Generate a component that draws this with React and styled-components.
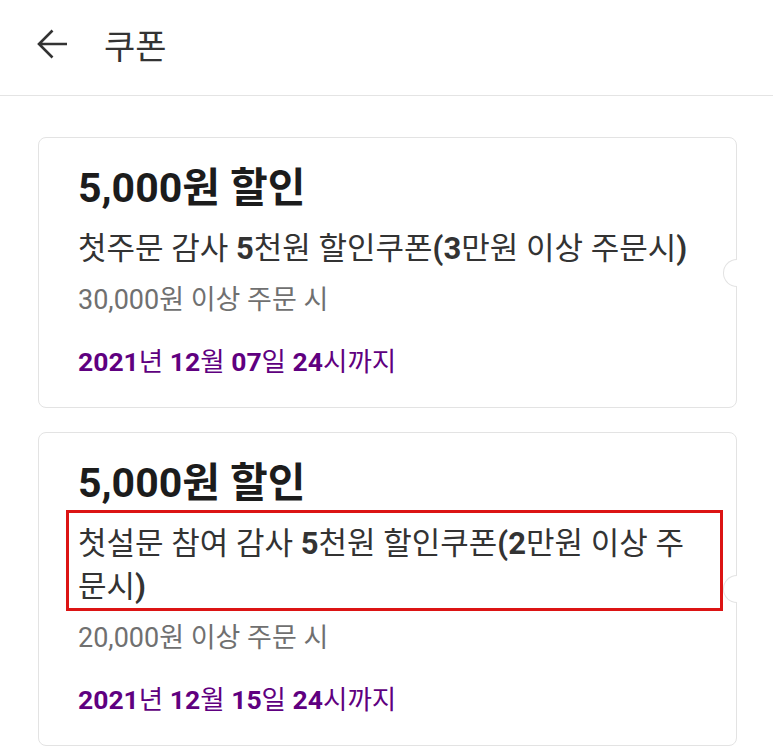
import React from "react";
import styled, { createGlobalStyle } from "styled-components";

const GlobalStyle = createGlobalStyle`
    body {
        margin: 0;
        background: #ffffff;
        font-family: Roboto, "Noto Sans CJK KR", sans-serif;
        color: #333333;
    }
`;

const Page = styled.div`
    width: 773px;
    min-height: 755px;
    background: #ffffff;
`;

const Header = styled.header`
    height: 95px;
    display: flex;
    align-items: center;
    padding: 0 0 0 37px;
    border-bottom: 1px solid #e4e4e4;
    box-sizing: content-box;
`;

const BackButton = styled.button`
    width: 32px;
    height: 32px;
    padding: 0;
    border: 0;
    background: none;
    display: flex;
    align-items: center;
    justify-content: center;
    margin-right: 35px;
    margin-top: -8px;
`;

const Title = styled.h1`
    margin: -6px 0 0;
    font-size: 34px;
    font-weight: 400;
    color: #333333;
`;

const CouponList = styled.div`
    display: flex;
    flex-direction: column;
    gap: 24px;
    padding: 41px 36px 0 38px;
`;

const CouponCard = styled.div`
    position: relative;
    border: 1px solid #e3e3e3;
    border-radius: 8px;
    padding: 24px 39px 27px 39px;
`;

const Notch = styled.span`
    position: absolute;
    right: -1px;
    top: 50%;
    width: 14px;
    height: 28px;
    margin-top: -14px;
    box-sizing: border-box;
    border: 1px solid #e3e3e3;
    border-right: 0;
    border-radius: 14px 0 0 14px;
    background: #ffffff;
`;

const Amount = styled.div`
    font-size: 41px;
    line-height: 52px;
    font-weight: 700;
    color: #1c1c1c;
`;

const NameWrap = styled.div`
    position: relative;
    margin-top: 13px;
`;

const Name = styled.div`
    font-size: 31px;
    line-height: 43px;
    color: #333333;
`;

const Num = styled.span`
    font-weight: 700;
`;

const Highlight = styled.span`
    position: absolute;
    left: -12px;
    right: -26px;
    top: -12px;
    bottom: -3px;
    border: 3px solid #dc1414;
    pointer-events: none;
`;

const Condition = styled.div`
    margin-top: 12px;
    font-size: 27px;
    line-height: 36px;
    color: #707070;
`;

const Expire = styled.div`
    margin-top: 26px;
    font-size: 26.5px;
    line-height: 36px;
    color: #5f0080;
`;

function ArrowLeft() {
    return (
        <svg width="32" height="32" viewBox="0 0 32 32" fill="none">
            <path d="M30 16H2.5M15.5 2.5L2 16l13.5 13.5" stroke="#333333" strokeWidth="2.6" />
        </svg>
    );
}

const coupons = [
    {
        id: 1,
        name: <>첫주문 감사 <Num>5</Num>천원 할인쿠폰<Num>(3</Num>만원 이상 주문시<Num>)</Num></>,
        condition: "30,000원 이상 주문 시",
        expire: <><Num>2021</Num>년 <Num>12</Num>월 <Num>07</Num>일 <Num>24</Num>시까지</>,
        marked: false,
    },
    {
        id: 2,
        name: <>첫설문 참여 감사 <Num>5</Num>천원 할인쿠폰<Num>(2</Num>만원 이상 주문시<Num>)</Num></>,
        condition: "20,000원 이상 주문 시",
        expire: <><Num>2021</Num>년 <Num>12</Num>월 <Num>15</Num>일 <Num>24</Num>시까지</>,
        marked: true,
    },
];

export default function App() {
    return (
        <Page>
            <GlobalStyle />
            <Header>
                <BackButton aria-label="뒤로"><ArrowLeft /></BackButton>
                <Title>쿠폰</Title>
            </Header>
            <CouponList>
                {coupons.map((coupon) => (
                    <CouponCard key={coupon.id}>
                        <Amount>5,000원 할인</Amount>
                        <NameWrap>
                            <Name>{coupon.name}</Name>
                            {coupon.marked && <Highlight />}
                        </NameWrap>
                        <Condition>{coupon.condition}</Condition>
                        <Expire>{coupon.expire}</Expire>
                        <Notch />
                    </CouponCard>
                ))}
            </CouponList>
        </Page>
    );
}
